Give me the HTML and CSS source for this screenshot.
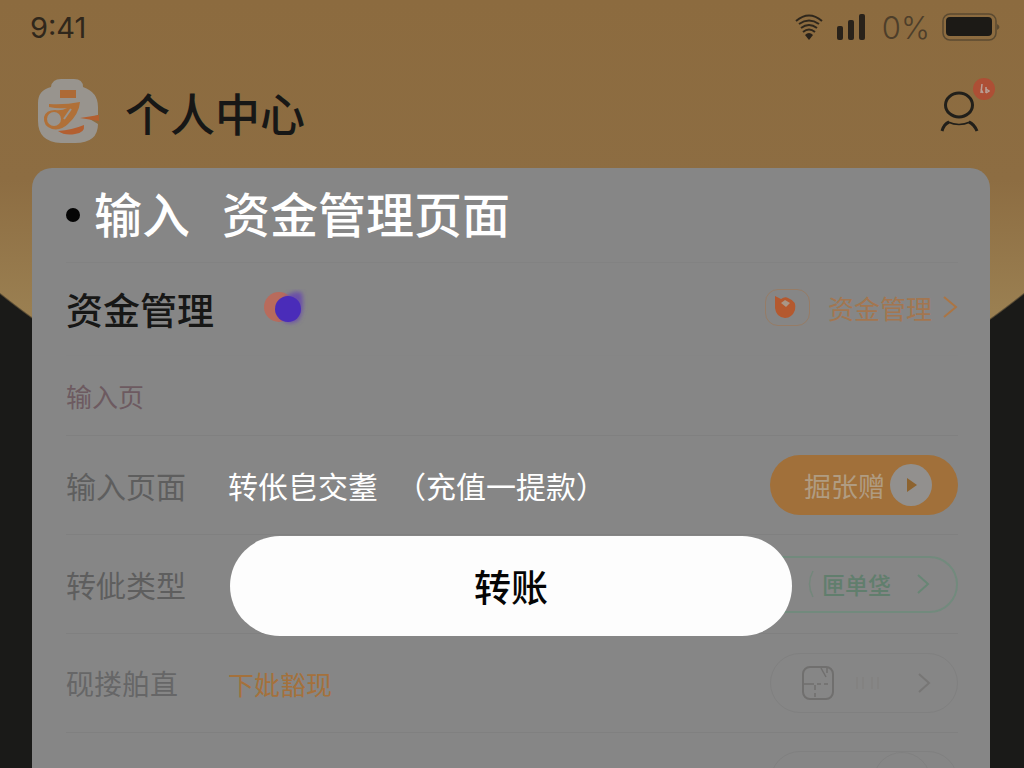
FILE: index.html
```html
<!DOCTYPE html>
<html lang="zh-CN">
<head>
<meta charset="utf-8">
<meta name="viewport" content="width=device-width, initial-scale=1">
<title>个人中心</title>
<link rel="stylesheet" href="styles.css">
</head>
<body>
<div class="screen">
  <div class="status-bar">
    <span class="clock">9:41</span>
    <div class="status-icons">
      <svg class="wifi" width="30" height="28" viewBox="0 0 30 28" fill="none" stroke="#2f271c" stroke-width="2">
        <path d="M2 8Q15-3 28 8" stroke-width="2"/><path d="M5 11Q15 4 25 11" stroke-width="2"/><path d="M7 15Q15 9 23 15"/><path d="M9 19Q15 14 21 19"/><path d="M11 22Q15 18 19 22L15 27Z" fill="#29221a" stroke="none"/>
      </svg>
      <svg width="30" height="28" viewBox="0 0 30 28" fill="#29221a">
        <rect x="1" y="13" width="6" height="14" rx="2"/><rect x="12" y="7" width="6" height="20" rx="2"/><rect x="23" y="1" width="6" height="26" rx="2"/>
      </svg>
      <span class="battery-level">0%</span>
      <svg width="58" height="28" viewBox="0 0 58 28" fill="none">
        <rect x="1" y="1" width="53" height="26" rx="7" stroke="#5b4a31" stroke-width="1.5"/><rect x="4" y="4" width="46" height="19" rx="4" fill="#1c1a16"/><path d="M55 11Q60 14 55 17Z" fill="#5b4a31"/>
      </svg>
    </div>
  </div>

  <header class="header">
    <svg class="logo" width="62" height="66" viewBox="0 0 62 66">
      <path d="M14 9Q15 1 24 1H37Q46 1 46 9Q61 14 61 29V37L51 40L61 46Q61 65 38 65H24Q1 64 1 43V25Q1 12 14 9Z" fill="#98948e"/>
      <path d="M23 12H39V20H23Z" fill="#ad6a36"/>
      <path d="M12 26Q28 27 43 24Q42 36 31 46Q24 53 15 51Q6 48 7 39Q9 32 18 32Q25 33 30 30Q21 31 12 29Z" fill="#b07038"/>
      <circle cx="17" cy="41" r="7" fill="#98948e"/>
      <path d="M27 41L34 31" stroke="#98948e" stroke-width="2"/>
      <path d="M21 53Q35 52 47 47Q48 55 38 56Q28 58 21 53ZM43 40L62 37V43Z" fill="#b35f30"/>
    </svg>
    <h1 class="title">个人中心</h1>
    <button class="profile" type="button" aria-label="个人">
      <svg width="40" height="42" viewBox="0 0 40 42" fill="none" stroke="#211f1a" stroke-width="3">
        <ellipse cx="19" cy="15" rx="13.5" ry="12"/><path d="M2 41Q4 34 9 32M29 32Q34 34 37 41"/><path d="M8 32Q19 37 30 32" stroke-width="1.5"/>
      </svg>
      <span class="badge"><svg width="12" height="12" viewBox="0 0 12 12" fill="none" stroke="#b9a198" stroke-width="1.5"><path d="M4 1L3 10M3 6L5 10M8 4V10M8 6L11 8L8 10"/></svg></span>
    </button>
  </header>

  <main class="card">
    <div class="row row-heading">
      <span class="bullet"></span>
      <h2 class="heading"><span>输入</span><span>资金管理页面</span></h2>
    </div>
    <div class="row row-funds">
      <h3 class="subheading">资金管理</h3>
      <svg class="dots" width="48" height="40" viewBox="0 0 48 40">
        <defs><filter id="glow" x="-50%" y="-50%" width="200%" height="200%"><feGaussianBlur stdDeviation="2"/></filter></defs>
        <circle cx="17" cy="18" r="15" fill="#b86b5c"/>
        <path d="M22 10Q31 0 40 4Q43 22 36 32Q24 38 18 27Z" fill="#6b50a8" filter="url(#glow)"/>
        <circle cx="26" cy="20" r="13" fill="#4a2cb9"/>
      </svg>
      <a class="funds-link" href="#">
        <span class="funds-icon"><svg width="24" height="24" viewBox="0 0 24 24"><path d="M2 1L8 4Q12 1 15 3Q24 6 22 15Q19 23 12 23Q3 22 2 13Z" fill="#b4592f"/><path d="M8 8L12 5L17 8L13 12Z" fill="#a99686"/></svg></span>
        <span>资金管理</span>
        <svg width="16" height="22" viewBox="0 0 16 22" fill="none" stroke="#ab7544" stroke-width="2"><path d="M2 1L14 11L2 21"/></svg>
      </a>
    </div>
    <div class="row row-note"><span>输入页</span></div>
    <div class="row">
      <span class="label">输入页面</span>
      <span class="value value-light"><span>转伥皀交耋</span><span>（充值一提款）</span></span>
      <button class="pill pill-orange" type="button">
        <span>掘张赠</span>
        <svg width="42" height="42" viewBox="0 0 42 42"><circle cx="21" cy="21" r="21" fill="#92908e"/><path d="M17 14L27 21L17 28Z" fill="#8d632f"/></svg>
      </button>
    </div>
    <div class="row">
      <span class="label">转佌类型</span>
      <button class="pill pill-green" type="button">
        <svg width="6" height="28" viewBox="0 0 6 28" fill="none" stroke="#73877b" stroke-width="1.5"><path d="M5 1Q-2 14 5 27"/></svg>
        <span>匣单垡</span>
        <svg class="chevron" width="14" height="22" viewBox="0 0 14 22" fill="none" stroke="#688675" stroke-width="2"><path d="M2 2L12 11L2 20"/></svg>
      </button>
      <button class="transfer" type="button">转账</button>
    </div>
    <div class="row">
      <span class="label label-soft">砚搂舶直</span>
      <span class="value value-orange">下妣豁现</span>
      <button class="pill pill-ghost" type="button" aria-label="选择">
        <svg width="34" height="36" viewBox="0 0 34 36" fill="none" stroke="#706f6e" stroke-width="2"><rect x="2" y="2" width="30" height="32" rx="7"/><path d="M3 19H13M16 19H20M23 19H27M14 20V25M14 28V32M20 3L25 12M26 3V8" stroke-width="1.5"/></svg>
        <svg width="26" height="14" viewBox="0 0 26 14" fill="none" stroke="#807f7d"><path d="M2 1V13M8 1V13M17 1V13M23 1V13"/></svg>
        <svg class="chevron" width="14" height="22" viewBox="0 0 14 22" fill="none" stroke="#777675" stroke-width="2"><path d="M2 2L12 11L2 20"/></svg>
      </button>
    </div>
    <div class="row">
      <span class="pill pill-ghost pill-next"><span class="knob"></span></span>
    </div>
  </main>
</div>
</body>
</html>
```
FILE: styles.css
```css
* { box-sizing: border-box; }
body {
  margin: 0;
  font-family: "Noto Sans CJK SC", "Noto Sans", sans-serif;
  color: #171716;
}
button { font: inherit; color: inherit; border: 0; padding: 0; background: none; cursor: pointer; }
a { color: inherit; text-decoration: none; }
h1, h2, h3 { margin: 0; font-weight: 500; }
svg { display: block; flex: none; }

.screen {
  display: flex;
  flex-direction: column;
  height: 100vh;
  overflow: hidden;
  background:
    radial-gradient(circle at 50% -347px, transparent 819px, #1a1a18 821px),
    linear-gradient(180deg, #8c6b3f 0, #8d6d42 180px, #9a7f51 310px);
}

.status-bar {
  display: flex;
  justify-content: space-between;
  align-items: center;
  height: 54px;
  padding: 0 24px 0 30px;
  font-family: Inter, sans-serif;
  font-size: 29px;
  color: #30271b;
}
.status-icons { display: flex; align-items: center; gap: 12px; }
.battery-level { margin-left: 4px; font-size: 31px; font-weight: 300; color: #4d3e2a; }

.header {
  display: flex;
  align-items: center;
  height: 114px;
  padding: 0 44px 0 37px;
}
.title { margin-left: 26px; padding-top: 4px; font-size: 45px; line-height: 64px; }
.profile { position: relative; margin-left: auto; }
.badge {
  position: absolute;
  top: -12px;
  right: -15px;
  display: grid;
  place-items: center;
  width: 22px;
  height: 22px;
  border-radius: 50%;
  background: #ad4f35;
}

.card {
  flex: 1;
  margin: 0 34px 0 32px;
  padding: 0 32px 0 34px;
  border-radius: 20px 20px 0 0;
  background: #868686;
  overflow: hidden;
}
.row {
  position: relative;
  display: flex;
  align-items: center;
  height: 99px;
  border-bottom: 1px solid #808080;
}
.row-heading { height: 95px; border-bottom-color: #828282; }
.bullet { width: 14px; height: 14px; border-radius: 50%; background: #050505; }
.heading { display: flex; gap: 32px; margin-left: 14px; padding-bottom: 6px; font-size: 48px; line-height: 64px; color: #fff; }
.row-funds { height: 93px; border-bottom-color: #858585; }
.subheading { font-size: 37px; }
.dots { margin-left: 48px; }
.funds-link { display: flex; align-items: center; gap: 14px; margin-left: auto; padding-bottom: 4px; font-size: 26px; color: #a37650; }
.funds-icon { display: grid; place-items: center; width: 45px; height: 37px; margin-right: 4px; border: 1px solid #967c66; border-radius: 13px; }
.funds-link svg:last-child { margin-left: -4px; }
.row-note { height: 80px; font-size: 26px; color: #6d5a60; }

.label { width: 162px; font-size: 30px; color: #5e5e5e; }
.label-soft { font-size: 28px; color: #666667; }
.value { display: flex; font-size: 30px; white-space: nowrap; }
.value-light { gap: 18px; color: #fff; }
.value-orange { font-size: 26px; color: #a4713c; }

.pill {
  display: flex;
  align-items: center;
  width: 188px;
  height: 60px;
  margin-left: auto;
  padding: 0 26px 0 34px;
  border-radius: 30px;
}
.pill-orange { justify-content: space-between; background: #a1703a; color: #b09c82; font-size: 27px; }
.pill-green { width: 240px; height: 57px; padding-left: 88px; gap: 8px; border: 2px solid #728a7d; color: #617e6d; font-size: 23px; font-weight: 500; }
.pill-ghost { gap: 20px; border: 1px solid #808080; padding-left: 30px; }
.pill-next { align-self: flex-start; margin-top: 18px; overflow: hidden; }
.knob { width: 58px; height: 58px; margin-left: auto; border: 1px solid #808080; border-radius: 50%; }
.chevron { margin-left: auto; }

.transfer {
  position: absolute;
  left: 164px;
  right: 166px;
  top: 1px;
  height: 100px;
  border-radius: 50px;
  background: #fdfdfd;
  color: #050505;
  font-size: 37px;
  font-weight: 500;
  z-index: 1;
}
```
